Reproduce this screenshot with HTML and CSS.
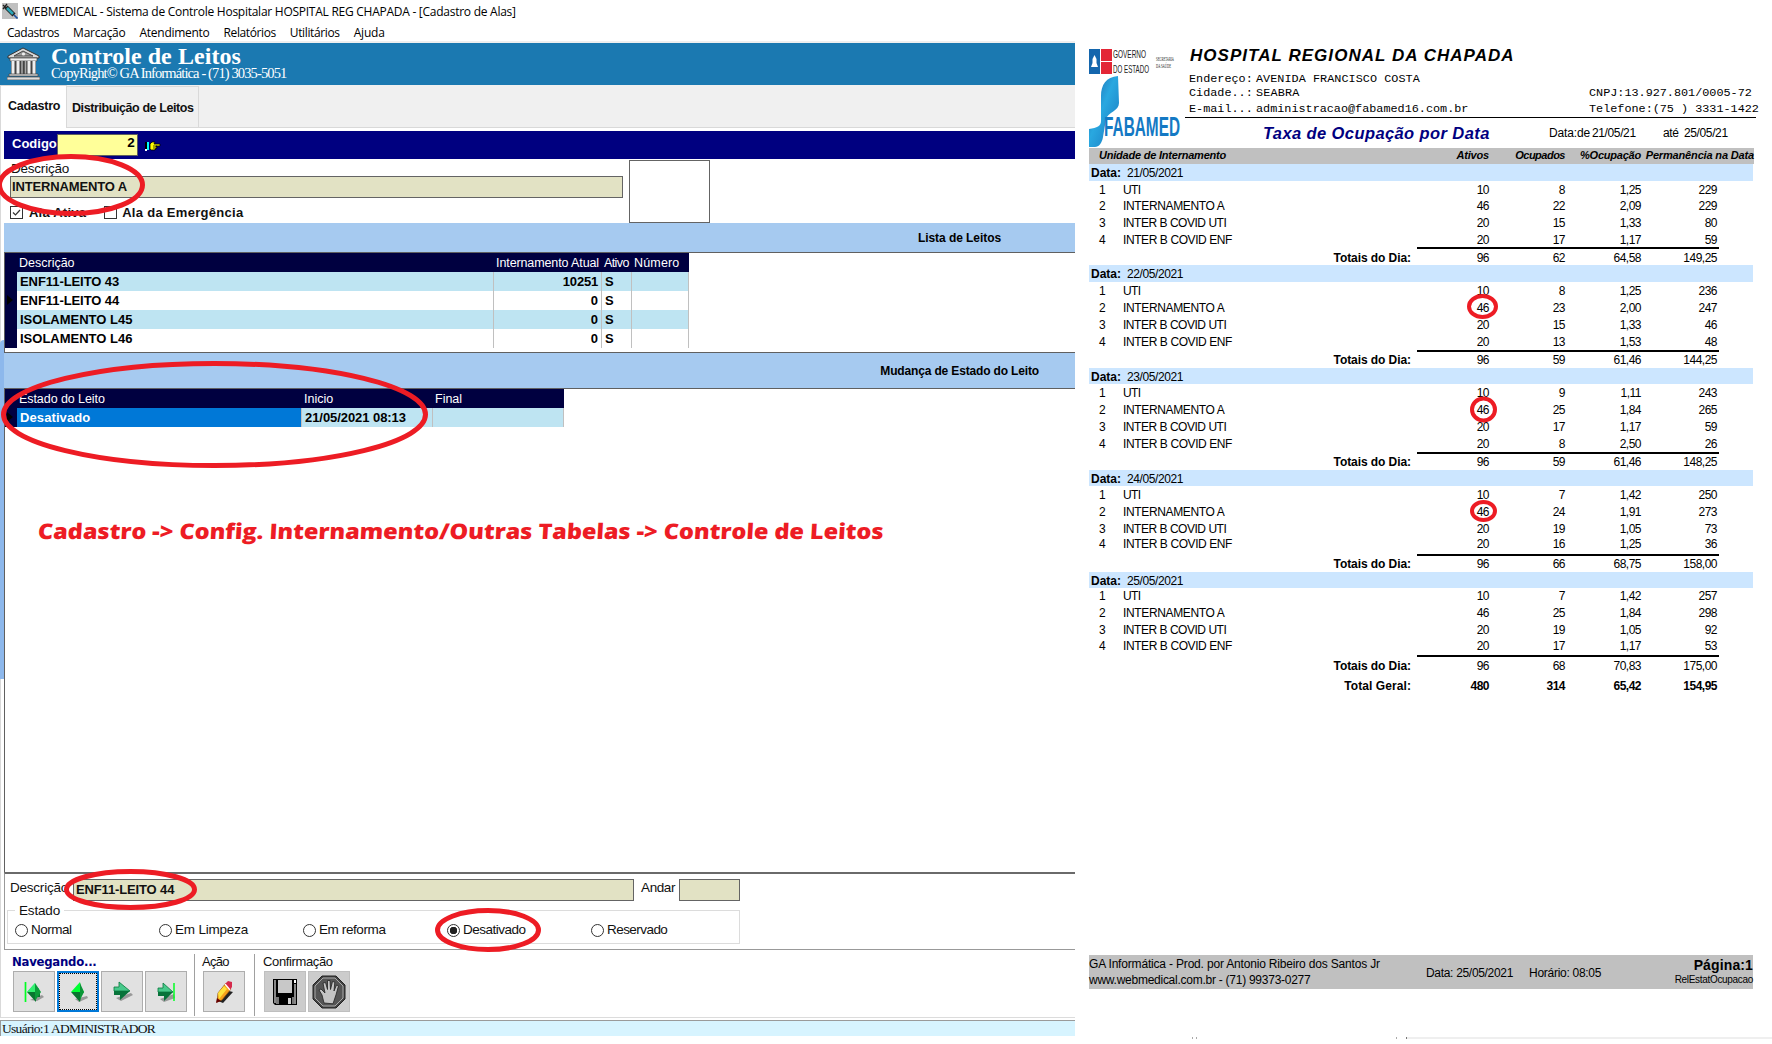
FILE: index.html
```html
<!DOCTYPE html>
<html lang="pt-BR">
<head>
<meta charset="utf-8">
<title>WEBMEDICAL - Cadastro de Alas</title>
<link rel="stylesheet" href="styles.css">
</head>
<body>
<main class="screen">
<section class="app">
  <header class="titlebar">
    <svg class="app-icon" width="16" height="16" viewBox="0 0 16 16"><rect width="16" height="16" fill="#c0c0c0"/><path d="M1 2l4 4M5 1L1 6" stroke="#222" stroke-width="1.3"/><path d="M4 4l8 8" stroke="#222" stroke-width="4.4"/><path d="M5 5l6 6" stroke="#2aa6b8" stroke-width="2.6"/><path d="M12 12l3.5 3.5" stroke="#1b50a0" stroke-width="1.6"/></svg>
    <span data-w="493">WEBMEDICAL - Sistema de Controle Hospitalar HOSPITAL REG CHAPADA - [Cadastro de Alas]</span>
  </header>
  <nav class="menu"><span data-w="52">Cadastros</span><span data-w="52">Marcação</span><span data-w="70">Atendimento</span><span data-w="52">Relatórios</span><span data-w="50">Utilitários</span><span data-w="31">Ajuda</span></nav>
  <div class="banner">
    <svg width="33" height="33" viewBox="0 0 33 33"><path d="M1 9L16 1l16 8v2H1z" fill="#d8d8d8" stroke="#333"/><path d="M7 9l9-5 10 5z" fill="#999" stroke="#444"/><circle cx="16.500" cy="7" r="1.600" fill="#eee"/><path d="M3 11h27v3H3z" fill="#eee" stroke="#444" stroke-width=".7"/><path d="M4 14h25v13H4z" fill="#444"/><path d="M6 14v13M11 14v13M22 14v13M27 14v13" stroke="#eee" stroke-width="3"/><path d="M15 14v13M18.500 14v13" stroke="#aaa" stroke-width="1.500"/><path d="M2 27h29v2H2zM0 30h33v3H0z" fill="#ddd" stroke="#444" stroke-width=".7"/></svg>
    <div class="banner-text"><h1><span data-w="190">Controle de Leitos</span></h1><p><span data-w="235">CopyRight© GA Informática - (71) 3035-5051</span></p></div>
  </div>
  <div class="tabs"><div class="tab active"><span data-w="52">Cadastro</span></div><div class="tab"><span data-w="122">Distribuição de Leitos</span></div></div>
  <div class="page">
    <div class="codebar"><label data-w="45">Codigo</label><output class="code">2</output>
      <svg width="16" height="11" viewBox="0 0 16 11"><path d="M0 8h2v2H0z" fill="#fff"/><path d="M0 1h2v7H0z" fill="#000"/><path d="M2 1h2v8H2z" fill="#0ff"/><path d="M5 3l2-2h3l-1 2h6v2h-4v1h1v1h-1v1h-1v1H6L5 8z" fill="#ff0" stroke="#000" stroke-width=".8"/><path d="M8 5h4M8 7h3" stroke="#000" stroke-width=".7"/></svg>
    </div>
    <div class="form">
      <div class="form-left">
        <label class="lbl"><span data-w="58">Descrição</span></label>
        <div class="field"><span data-w="115">INTERNAMENTO A</span></div>
        <div class="checks">
          <i class="check"><svg width="11" height="11" viewBox="0 0 11 11"><path d="M2 5.500l2.500 2.500L9 3" fill="none" stroke="#333" stroke-width="1.200"/></svg></i><span class="c1" data-w="57">Ala Ativa</span>
          <i class="check"></i><span data-w="121">Ala da Emergência</span>
        </div>
      </div>
      <div class="photo"></div>
    </div>
    <div class="band"><span class="band-title" data-w="83">Lista de Leitos</span></div>
    <div class="grid beds">
      <div class="row head"><i></i><span><b data-w="56">Descrição</b></span><span class="r"><b data-w="103">Internamento Atual</b></span><span><b data-w="25">Ativo</b></span><span><b data-w="45">Número</b></span></div>
      <div class="row odd"><i></i><span><b data-w="99">ENF11-LEITO 43</b></span><span class="r"><b data-w="35">10251</b></span><span>S</span><span></span></div>
      <div class="row"><i class="cur"></i><span><b data-w="99">ENF11-LEITO 44</b></span><span class="r">0</span><span>S</span><span></span></div>
      <div class="row odd"><i></i><span><b data-w="112">ISOLAMENTO L45</b></span><span class="r">0</span><span>S</span><span></span></div>
      <div class="row"><i></i><span><b data-w="112">ISOLAMENTO L46</b></span><span class="r">0</span><span>S</span><span></span></div>
    </div>
    <div class="band second"><span class="band-title" data-w="159">Mudança de Estado do Leito</span></div>
    <div class="grid states">
      <div class="row head"><i></i><span><b data-w="86">Estado do Leito</b></span><span><b data-w="29">Inicio</b></span><span><b data-w="27">Final</b></span></div>
      <div class="row odd"><i class="cur"></i><span class="sel"><b data-w="70">Desativado</b></span><span><b data-w="101">21/05/2021 08:13</b></span><span></span></div>
    </div>
    <div class="bedform">
      <div class="bedline"><label data-w="58">Descrição</label><div class="field"><span data-w="98">ENF11-LEITO 44</span></div><label class="floor" data-w="34">Andar</label><div class="field small"></div></div>
      <div class="state">
        <span class="legend"><span data-w="41">Estado</span></span>
        <label><i class="radio"></i><span data-w="41">Normal</span></label><label><i class="radio"></i><span data-w="73">Em Limpeza</span></label><label><i class="radio"></i><span data-w="67">Em reforma</span></label><label><i class="radio on"></i><span data-w="63">Desativado</span></label><label><i class="radio"></i><span data-w="60">Reservado</span></label>
      </div>
    </div>
    <div class="toolbar">
      <div class="group nav"><p class="navlabel"><span data-w="85">Navegando...</span></p>
        <div class="btns">
          <button><svg width="24" height="24" viewBox="0 0 24 24"><path d="M8 20l12-5 2 2-7 4z" fill="#999"/><path d="M3.500 2v20" stroke="#0f2" stroke-width="1.700"/><path d="M5 12l8-9v5h4v4z" fill="#3de08a"/><path d="M5 12h13v5h-4v5z" fill="#08752f"/><path d="M13 3l6 9-6 9z" fill="#0b9b39"/><path d="M5 12l8-9v9z" fill="#32f070"/></svg></button>
          <button class="focus"><svg width="24" height="24" viewBox="0 0 24 24"><path d="M9 19l12-3 1 2-9 4z" fill="#999"/><path d="M5 12l9-10 1 5 3 5z" fill="#0f3"/><path d="M5 12h13l-3 4-1 6z" fill="#08752f"/><path d="M14 3l4 9-4 8z" fill="#0a9637"/></svg></button>
          <button><svg width="24" height="24" viewBox="0 0 24 24"><path d="M6 18l15-5 2 2-12 6z" fill="#999"/><path d="M4 7h5V2l11 9H4z" fill="#48c98b" stroke="#087a3c" stroke-width=".8"/><path d="M4 11h16l-10 9v-5H4z" fill="#07733a"/></svg></button>
          <button><svg width="24" height="24" viewBox="0 0 24 24"><path d="M6 19l14-5 1 4-11 4z" fill="#999"/><path d="M4 8h5V3l10 9H4z" fill="#48c98b" stroke="#087a3c" stroke-width=".8"/><path d="M4 12h15l-9 9v-5H4z" fill="#07733a"/><path d="M20 3v18" stroke="#0f2" stroke-width="1.500"/></svg></button>
        </div>
      </div>
      <div class="group action"><p><span data-w="27">Ação</span></p><div class="btns"><button><svg width="24" height="26" viewBox="0 0 24 26"><path d="M6 22L17 12l4 1-10 11z" fill="#222"/><path d="M6 14L14 4l5 6-9 11-5 2z" fill="#f6a21c" stroke="#8a4a08" stroke-width=".7"/><path d="M6 14l6-7 3 3-8 10z" fill="#ffe23c"/><path d="M13 5l3-3 4 1v5l-2 3z" fill="#d52a4c"/><path d="M13 5l5 6" stroke="#fff" stroke-width="1.300"/><path d="M5 19l-1 5 5-2z" fill="#600"/></svg></button></div></div>
      <div class="group confirm"><p><span data-w="70">Confirmação</span></p><div class="btns">
        <button class="off"><svg width="26" height="28" viewBox="0 0 26 28"><path d="M1 1h24v26H3l-2-2z" fill="#000"/><path d="M2 2h2v23H2zM22 6h2v20h-2z" fill="#888"/><path d="M6 2h14v13H6z" fill="#c8c8c8"/><path d="M22 2h2v3h-2z" fill="#fff"/><path d="M7 19h9v7H7z" fill="#000"/><path d="M16 20h3v6h-3z" fill="#d0d0d0"/><path d="M4 19h3v7H4zM20 19h2v7h-2z" fill="#777"/></svg></button>
        <button class="off"><svg width="34" height="34" viewBox="0 0 34 34"><path d="M10 1h14l9 9v14l-9 9H10l-9-9V10z" fill="#444" stroke="#222"/><path d="M11 3h12l8 8v12l-8 8H11l-8-8V11z" fill="#555" stroke="#aaa"/><path d="M12 28l-2-8-3-5 2-1 4 4-2-10 2.500-.5 2 7V5.500h2.500l.5 9 2-8 2.300.5-.8 9 2.500-6 2 .8-2.500 9-2 6-1 3z" fill="#c4c4c4" stroke="#222" stroke-width=".8"/></svg></button>
      </div></div>
    </div>
  </div>
  <footer class="status"><span data-w="153">Usuário:1 ADMINISTRADOR</span></footer>
</section>

<section class="report">
  <header class="rep-head">
    <div class="logos">
      <svg class="gov" width="90" height="25" viewBox="0 0 90 25"><path d="M0 0h11v25H0z" fill="#1466ad"/><path d="M5.500 6l2 4v4l1.500 4H2l1.500-4v-4z" fill="#fff"/><path d="M12 0h11v12H12zM12 13h11v12H12z" fill="#e32636"/>
        <text class="govname" x="24" y="9" textLength="33" lengthAdjust="spacingAndGlyphs">GOVERNO</text><text class="govname" x="24" y="23.500" textLength="36" lengthAdjust="spacingAndGlyphs">DO ESTADO</text>
        <text class="sec" x="67" y="11.500" textLength="18" lengthAdjust="spacingAndGlyphs">SECRETARIA</text><text class="sec" x="67" y="18.500" textLength="15" lengthAdjust="spacingAndGlyphs">DA SAÚDE</text>
      </svg>
      <div class="fab">
        <svg width="96" height="72" viewBox="0 0 96 72"><defs><linearGradient id="g" x1="0" y1="0" x2="1" y2="1"><stop offset="0" stop-color="#1b5fa8"/><stop offset=".45" stop-color="#29a8e0"/><stop offset="1" stop-color="#1774bd"/></linearGradient></defs><path d="M29 0C17 1 12 9 12 20v25c0 5-4 7-12 8v18h6c4 0 7-4 8-10l3-18c2-7 13-8 13-16z" fill="url(#g)"/><text class="fabname" x="15" y="60" textLength="76" lengthAdjust="spacingAndGlyphs">FABAMED</text></svg>
      </div>
    </div>
    <div class="hospital">
      <h2><span data-w="325">HOSPITAL REGIONAL DA CHAPADA</span></h2>
      <div class="info"><span><b data-w="64">Endereço:</b></span><span><b data-w="164">AVENIDA FRANCISCO COSTA</b></span><span></span></div>
      <div class="info"><span><b data-w="64">Cidade..:</b></span><span><b data-w="43">SEABRA</b></span><span><b data-w="163">CNPJ:13.927.801/0005-72</b></span></div>
      <div class="info last"><span><b data-w="64">E-mail...</b></span><span><b data-w="212">administracao@fabamed16.com.br</b></span><span><b data-w="170">Telefone:(75 ) 3331-1422</b></span></div>
      <div class="subject"><h3><span data-w="227">Taxa de Ocupação por Data</span></h3><span><b data-w="41">Data:de</b></span><span><b data-w="44">21/05/21</b></span><span><b data-w="16">até</b></span><span><b data-w="44">25/05/21</b></span></div>
    </div>
  </header>
  <div class="cols"><span class="unit"><b data-w="127">Unidade de Internamento</b></span><span><b data-w="33">Ativos</b></span><span><b data-w="50">Ocupados</b></span><span><b data-w="61">%Ocupação</b></span><span><b data-w="108">Permanência na Data</b></span></div>
  <div class="day d1"><div class="date"><b data-w="30">Data:</b><span data-w="56">21/05/2021</span></div>
    <div class="line"><span>1</span><span><b data-w="17">UTI</b></span><span>10</span><span>8</span><span>1,25</span><span>229</span></div>
    <div class="line"><span>2</span><span><b data-w="101">INTERNAMENTO A</b></span><span>46</span><span>22</span><span>2,09</span><span>229</span></div>
    <div class="line"><span>3</span><span><b data-w="103">INTER B COVID UTI</b></span><span>20</span><span>15</span><span>1,33</span><span>80</span></div>
    <div class="line"><span>4</span><span><b data-w="109">INTER B COVID ENF</b></span><span>20</span><span>17</span><span>1,17</span><span>59</span></div>
    <div class="rule"></div><div class="total"><strong><span data-w="77">Totais do Dia:</span></strong><span>96</span><span>62</span><span>64,58</span><span>149,25</span></div></div>
  <div class="day d2"><div class="date"><b data-w="30">Data:</b><span data-w="56">22/05/2021</span></div>
    <div class="line"><span>1</span><span><b data-w="17">UTI</b></span><span>10</span><span>8</span><span>1,25</span><span>236</span></div>
    <div class="line"><span>2</span><span><b data-w="101">INTERNAMENTO A</b></span><span>46</span><span>23</span><span>2,00</span><span>247</span></div>
    <div class="line"><span>3</span><span><b data-w="103">INTER B COVID UTI</b></span><span>20</span><span>15</span><span>1,33</span><span>46</span></div>
    <div class="line"><span>4</span><span><b data-w="109">INTER B COVID ENF</b></span><span>20</span><span>13</span><span>1,53</span><span>48</span></div>
    <div class="rule"></div><div class="total"><strong><span data-w="77">Totais do Dia:</span></strong><span>96</span><span>59</span><span>61,46</span><span>144,25</span></div></div>
  <div class="day d3"><div class="date"><b data-w="30">Data:</b><span data-w="56">23/05/2021</span></div>
    <div class="line"><span>1</span><span><b data-w="17">UTI</b></span><span>10</span><span>9</span><span>1,11</span><span>243</span></div>
    <div class="line"><span>2</span><span><b data-w="101">INTERNAMENTO A</b></span><span>46</span><span>25</span><span>1,84</span><span>265</span></div>
    <div class="line"><span>3</span><span><b data-w="103">INTER B COVID UTI</b></span><span>20</span><span>17</span><span>1,17</span><span>59</span></div>
    <div class="line"><span>4</span><span><b data-w="109">INTER B COVID ENF</b></span><span>20</span><span>8</span><span>2,50</span><span>26</span></div>
    <div class="rule"></div><div class="total"><strong><span data-w="77">Totais do Dia:</span></strong><span>96</span><span>59</span><span>61,46</span><span>148,25</span></div></div>
  <div class="day d4"><div class="date"><b data-w="30">Data:</b><span data-w="56">24/05/2021</span></div>
    <div class="line"><span>1</span><span><b data-w="17">UTI</b></span><span>10</span><span>7</span><span>1,42</span><span>250</span></div>
    <div class="line"><span>2</span><span><b data-w="101">INTERNAMENTO A</b></span><span>46</span><span>24</span><span>1,91</span><span>273</span></div>
    <div class="line"><span>3</span><span><b data-w="103">INTER B COVID UTI</b></span><span>20</span><span>19</span><span>1,05</span><span>73</span></div>
    <div class="line"><span>4</span><span><b data-w="109">INTER B COVID ENF</b></span><span>20</span><span>16</span><span>1,25</span><span>36</span></div>
    <div class="rule"></div><div class="total"><strong><span data-w="77">Totais do Dia:</span></strong><span>96</span><span>66</span><span>68,75</span><span>158,00</span></div></div>
  <div class="day d5"><div class="date"><b data-w="30">Data:</b><span data-w="56">25/05/2021</span></div>
    <div class="line"><span>1</span><span><b data-w="17">UTI</b></span><span>10</span><span>7</span><span>1,42</span><span>257</span></div>
    <div class="line"><span>2</span><span><b data-w="101">INTERNAMENTO A</b></span><span>46</span><span>25</span><span>1,84</span><span>298</span></div>
    <div class="line"><span>3</span><span><b data-w="103">INTER B COVID UTI</b></span><span>20</span><span>19</span><span>1,05</span><span>92</span></div>
    <div class="line"><span>4</span><span><b data-w="109">INTER B COVID ENF</b></span><span>20</span><span>17</span><span>1,17</span><span>53</span></div>
    <div class="rule"></div><div class="total"><strong><span data-w="77">Totais do Dia:</span></strong><span>96</span><span>68</span><span>70,83</span><span>175,00</span></div></div>
  <div class="total grand"><strong><span data-w="67">Total Geral:</span></strong><span>480</span><span>314</span><span>65,42</span><span>154,95</span></div>
  <footer class="rep-foot">
    <div class="maker"><p><span data-w="291">GA Informática - Prod. por Antonio Ribeiro dos Santos Jr</span></p><p><span data-w="221">www.webmedical.com.br - (71) 99373-0277</span></p></div>
    <div class="when"><span data-w="87">Data: 25/05/2021</span><span data-w="72">Horário: 08:05</span></div>
    <div class="pageno"><p class="num"><span data-w="59">Página:1</span></p><p class="name"><span data-w="78">RelEstatOcupacao</span></p></div>
  </footer>
  <div class="edge"><i></i><i></i><i></i><i class="bar"></i></div>
</section>
</main>

<div class="side-strip"></div>
<p class="note"><span data-w="769">Cadastro -&gt; Config. Internamento/Outras Tabelas -&gt; Controle de Leitos</span></p>
<svg class="marks" width="1772" height="1044" viewBox="0 0 1772 1044" fill="none" stroke="#ed1c24" stroke-width="5">
  <ellipse cx="71" cy="185" rx="71.500" ry="28.500"/>
  <ellipse cx="214.500" cy="414.500" rx="211" ry="51"/>
  <ellipse cx="130.500" cy="889.500" rx="64" ry="18"/>
  <ellipse cx="488" cy="930" rx="50.500" ry="19.500"/>
  <ellipse cx="1482.500" cy="306.500" rx="13.500" ry="10.500" stroke-width="4"/>
  <ellipse cx="1483.500" cy="409.500" rx="11.500" ry="11" stroke-width="4"/>
  <ellipse cx="1483.500" cy="511" rx="11.500" ry="9" stroke-width="4"/>
</svg>
<script src="fit.js"></script>
</body>
</html>
```
FILE: styles.css
```css
* { box-sizing: border-box; }
body { margin: 0; background: #fff; color: #111; font: 13px/16px "Liberation Sans", Arial, sans-serif; overflow: hidden; position: relative; }
h1, h2, h3, p { margin: 0; }
[data-w] { display: inline-block; white-space: pre; }
.screen { display: flex; width: 1772px; height: 1044px; overflow: hidden; }
.app { width: 1075px; display: flex; flex-direction: column; }
.titlebar { height: 25px; display: flex; align-items: center; gap: 5px; padding: 0 0 2px 2px; font: 12px/18px "Open Sans", "Noto Sans", sans-serif; color: #000; }
.app-icon { margin-top: -1px; }
.menu { height: 18px; padding-left: 7px; border-bottom: 2px solid #efefef; display: flex; gap: 14px; font: 12px/16px "Open Sans", "Noto Sans", sans-serif; color: #000; }
.banner { height: 42px; background: #1b79b1; color: #fff; display: flex; padding: 4px 0 0 7px; gap: 11px; font-family: "Liberation Serif", "Times New Roman", serif; }
.banner h1 { font-size: 24px; line-height: 20px; margin-top: -1px; }
.banner p { font-size: 14.5px; line-height: 16px; margin-top: -1px; }
.tabs { height: 43px; background: #f0f0f0; border-bottom: 1px solid #d9d9d9; display: flex; font-weight: bold; font-size: 12.5px; align-items: flex-end; }
.tab { height: 41px; width: 132px; border: 1px solid #d9d9d9; border-width: 1px 1px 0 0; display: flex; align-items: center; padding: 2px 0 0 5px; }
.tab.active { width: 67px; height: 43px; margin-bottom: -1px; background: #fff; padding: 0 0 3px 7px; border-left: 1px solid #d9d9d9; }
.page { height: 890px; padding: 3px 0 0 3px; border-left: 1px solid #d9d9d9; border-bottom: 1px solid #dcdcdc; display: flex; flex-direction: column; }
.codebar { height: 28px; background: #000080; color: #fff; display: flex; align-items: center; padding-left: 8px; font-weight: bold; }
.codebar label { margin-top: -1px; }
.codebar svg { margin: 4px 0 0 7px; }
.code { width: 81px; height: 22px; background: #ffff99; color: #000; border: 1px solid #5f5f5f; text-align: right; padding: 0 2px; font-size: 13.500px; }
.form { height: 64px; display: flex; padding-top: 1px; }
.form-left { width: 625px; padding-left: 6px; }
.lbl { display: block; height: 16px; padding-left: 1px; font-size: 13.5px; line-height: 17px; }
.field { height: 22px; background: #e2e2c4; border: 1px solid #646464; font-weight: bold; padding: 1px 0 0 1px; line-height: 17px; }
.form-left .field { width: 613px; }
.checks { display: flex; align-items: center; height: 18px; margin-top: 5px; font-weight: bold; }
.checks span { margin-top: 2px; }
.check { width: 13px; height: 13px; border: 1px solid #333; background: #fff; margin-top: 1px; }
.check svg { display: block; }
.check + span { margin-left: 6px; }
.check + .c1 { margin-right: 18px; }
.checks .check:nth-of-type(2) + span { margin-left: 5px; }
.photo { width: 81px; height: 63px; border: 1px solid #646464; }
.band { height: 30px; background: #a6caf0; border-bottom: 1px solid #606060; display: flex; justify-content: flex-end; padding: 2px 74px 0 0; align-items: center; font-weight: bold; font-size: 12px; color: #000; }
.band.second { height: 37px; border-top: 1px solid #606060; padding-right: 36px; }
.grid { color: #000; font-size: 13px; font-weight: bold; border-left: 1px solid #606060; }
.beds { height: 99px; }
.row { display: grid; height: 19px; line-height: 20px; }
.row b { font-weight: inherit; }
.beds .row { grid-template-columns: 12px 477px 108px 30px 57px; width: 684px; }
.states .row { grid-template-columns: 12px 285px 131px 131px; width: 559px; }
.row i { background: #000040; }
.row > span { border-right: 1px solid #c0c0c0; padding: 0 3px; height: 19px; }
.row.head { background: #000040; color: #fff; font-weight: normal; font-size: 12.500px; }
.row.head > span { border-color: #000040; padding-right: 2px; padding-left: 2px; }
.row .r { text-align: right; }
.row.odd > span { background: #bee4f2; }
.row > .sel, .row.odd > .sel { background: #0078d7; color: #fff; }
.cur { display: flex; align-items: center; }
.cur::before { content: ""; border: 5px solid transparent; border-left: 6px solid #000; margin-left: 2px; }
.states { height: 484px; }
.bedform { height: 78px; border-top: 2px solid #6a6a6a; border-bottom: 1px solid #999; border-left: 1px solid #999; padding-top: 5px; }
.bedline { display: flex; padding-left: 5px; font-size: 13px; }
.bedline label { margin-top: 1px; font-size: 13.500px; }
.bedline .field { width: 561px; margin-left: 5px; padding-left: 2px; }
.bedline .floor { margin-left: 7px; }
.bedline .field.small { width: 61px; margin-left: 4px; }
.state { width: 733px; height: 34px; margin: 9px 0 0 2px; border: 1px solid #dcdcdc; display: flex; position: relative; padding: 11px 0 0 7px; font-size: 13.500px; }
.state label { width: 144px; display: flex; align-items: center; gap: 3px; height: 16px; }
.legend { position: absolute; left: 7px; top: -8px; background: #fff; padding: 0 4px; }
.radio { width: 13px; height: 13px; border: 1px solid #333; border-radius: 50%; background: #fff; }
.radio.on { background: radial-gradient(circle, #222 0 3.500px, #fff 4px); }
.toolbar { display: flex; padding: 4px 0 0 9px; height: 67px; font-size: 13px; }
.group { border-right: 1px solid #a0a0a0; height: 62px; }
.group p { line-height: 16px; height: 17px; margin-left: -1px; }
.group .navlabel { color: #000080; font: bold 13px/15px "DejaVu Sans Condensed", "Open Sans", sans-serif; }
.nav { width: 182px; }
.action { width: 60px; padding-left: 8px; }
.confirm { border: 0; padding-left: 9px; }
.btns { display: flex; gap: 2px; }
button { width: 42px; height: 41px; padding: 0; background: #e1e1e1; border: 1px solid #adadad; display: flex; align-items: center; justify-content: center; }
button.focus { border: 2px solid #0078d7; outline: 1px dotted #000; outline-offset: -3px; }
button.off { background: #ccc; border-color: #bfbfbf; }
.status { margin-top: 2px; height: 16px; background: #d7f4ff; border-top: 1px solid #9a9a9a; border-left: 1px solid #9a9a9a; font: 13.500px/15px "Liberation Serif", "Times New Roman", serif; padding-left: 1px; }

.report { width: 697px; padding-left: 14px; display: flex; flex-direction: column; color: #000; font-size: 12px; }
.report b { font-weight: inherit; }
.rep-head { height: 148px; display: flex; }
.logos { width: 96px; padding-top: 49px; }
.logos svg { display: block; overflow: visible; }
.govname { font: 10.500px "Liberation Sans", Arial, sans-serif; fill: #222; }
.sec { font: 6px "Liberation Serif", serif; fill: #222; }
.fab { margin-top: 2px; height: 72px; }
.fabname { fill: #1479c4; font: bold 27px "Liberation Sans", Arial, sans-serif; }
.hospital { width: 574px; }
.hospital h2 { margin-top: 45px; height: 27px; font: italic bold 17px/22px "Liberation Sans", Arial, sans-serif; padding-left: 5px; }
.info { display: grid; grid-template-columns: 67px 333px 1fr; height: 14px; line-height: 14px; padding-left: 4px; font-family: "Liberation Mono", "Courier New", monospace; font-size: 11.800px; }
.info.last { height: 18px; width: 571px; line-height: 14px; padding-top: 2px; border-bottom: 1px solid #000; white-space: nowrap; }
.subject { display: grid; grid-template-columns: 286px 43px 71px 21px 50px; padding-left: 78px; height: 30px; line-height: 30px; }
.subject h3 { font: italic bold 16.500px/30px "Liberation Sans", Arial, sans-serif; color: #000080; }
.cols { display: grid; grid-template-columns: 328px 72px 76px 76px 113px; width: 665px; height: 16px; background: #c0c0c0; font: italic bold 11px/15px "Liberation Sans", Arial, sans-serif; text-align: right; }
.cols .unit { text-align: left; padding-left: 10px; }
.date { background: #cce6ff; line-height: 18px; height: 100%; min-height: 0; padding-left: 2px; display: flex; gap: 6px; width: 664px; }
.report .date b { font-weight: bold; }
.day { display: grid; width: 664px; }
.d1 { grid-template-rows: 17px 17px 16px 17px 16px 2px 16px; }
.d2 { grid-template-rows: 17px 18px 16px 17px 17px 2px 16px; }
.d3 { grid-template-rows: 16px 17px 17px 17px 17px 2px 16px; }
.d4 { grid-template-rows: 16px 17px 17px 17px 17px 2px 16px; }
.d5 { grid-template-rows: 16px 17px 17px 17px 16px 2px 17px; }
.line, .total { display: grid; grid-template-columns: 34px 294px 72px 76px 76px 76px; line-height: 18px; }
.d1 .line:nth-child(3), .d2 .line:nth-child(3) { line-height: 16px; }
.d4 .line:nth-child(5), .d5 .line:nth-child(5) { line-height: 15px; }
.d5 .line:nth-child(2), .d5 .line:nth-child(3), .d5 .line:nth-child(4) { line-height: 17px; }
.line span:nth-child(n+3), .total > span { text-align: right; letter-spacing: -.5px; }
.line > span:first-child { padding-left: 10px; }
.rule { margin-left: 328px; width: 302px; background: #000; }
.total { grid-template-columns: 328px 72px 76px 76px 76px; line-height: 18px; }
.d2 .total, .d3 .total, .d4 .total { line-height: 16px; }
.total strong { text-align: right; padding-right: 6px; }
.grand { margin-top: 3px; font-weight: bold; height: 18px; line-height: 18px; }
.rep-foot { margin-top: 260px; width: 664px; height: 34px; background: #c0c0c0; display: flex; justify-content: space-between; }
.maker { width: 337px; font-size: 12px; line-height: 16px; padding: 1px 0 0; }
.when { display: flex; gap: 16px; flex: 1; line-height: 36px; }
.pageno { text-align: right; }
.num { font: bold 14px/18px "Liberation Sans", Arial, sans-serif; padding-top: 1px; }
.name { font-size: 10px; line-height: 12px; }
.edge { display: flex; margin-top: 48px; height: 2px; padding-left: 103px; }
.edge i { width: 1px; background: #aaa; margin-right: 3px; }
.edge i:nth-child(2) { margin-right: 199px; }
.edge i:nth-child(3) { margin-right: 9px; }
.edge .bar { flex: 1; margin: 0; background: #efefef; border-left: 1px solid #777; }
.side-strip { position: absolute; left: 0; top: 340px; width: 4px; height: 339px; background: #8db8ec; border-top-left-radius: 4px; }
.note { position: absolute; left: 38px; top: 517px; color: #ed1c24; font: 800 21.500px/28px "Open Sans", sans-serif; transform: scaleX(1.1) skewX(-3deg); transform-origin: left center; }
.marks { position: absolute; left: 0; top: 0; }
```
FILE: fit.js
```js
document.querySelectorAll('[data-w]').forEach(function (el) {
  var natural = el.offsetWidth;
  var n = el.textContent.length;
  var spacing = (Number(el.dataset.w) - natural) / n;
  el.style.letterSpacing = spacing.toFixed(3) + 'px';
});
```
